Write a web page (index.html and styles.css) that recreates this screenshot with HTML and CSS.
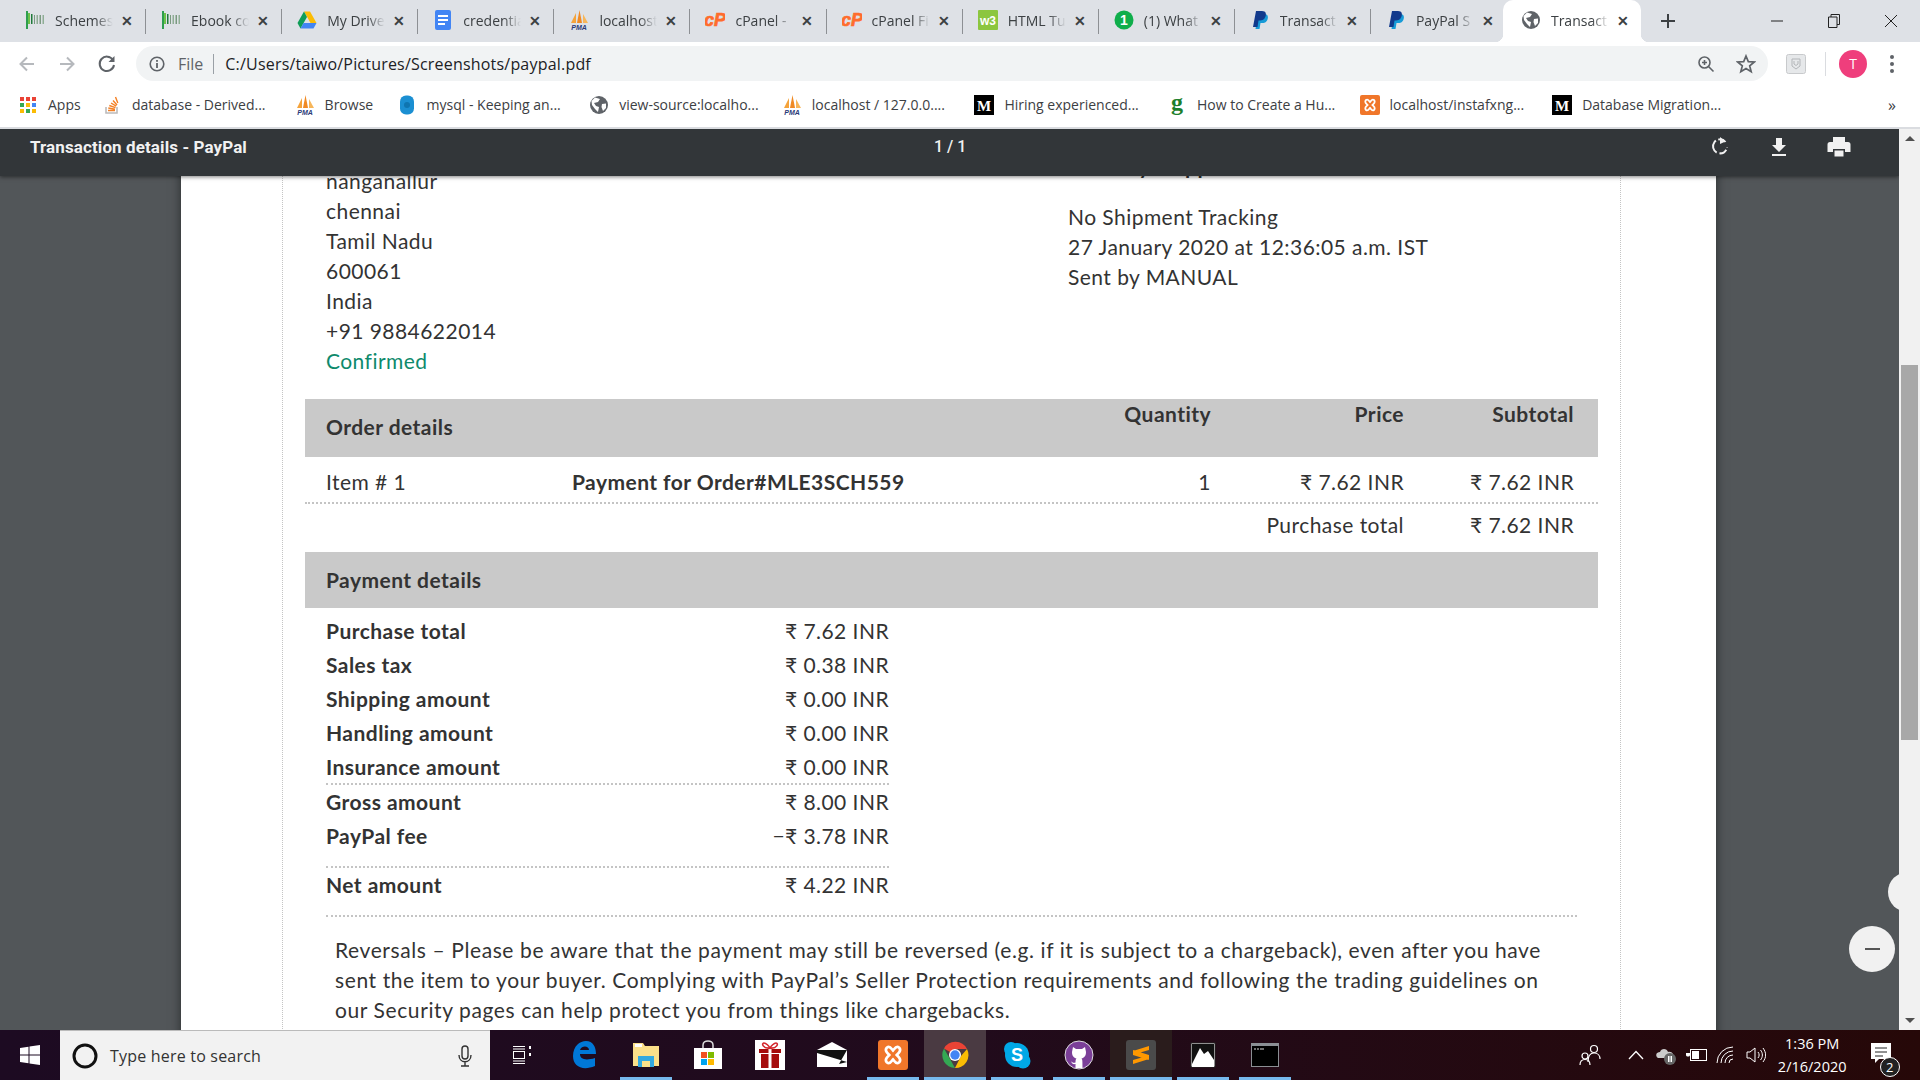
FILE: index.html
```html
<!DOCTYPE html>
<html>
  <head>
    <meta charset="UTF-8">
    <title>Transaction details - PayPal</title>
    <link rel="stylesheet" href="styles.css">
  </head>
  <body>
    <!-- shared favicons -->
    <svg class="sprite" width="0" height="0">
      <symbol id="ic-ilem" viewBox="0 0 20 20">
        <rect x="1" y="1" width="2" height="18" fill="#2e9e4f"/><rect x="3" y="3" width="2" height="11" fill="#6cc24a"/>
        <rect x="6" y="4" width="1.5" height="10" fill="#1f7a3a"/><rect x="9" y="5" width="1" height="9" fill="#7a9a80"/>
        <rect x="11.5" y="5" width="1.5" height="9" fill="#8fae95"/><rect x="14.5" y="5" width="1.5" height="9" fill="#7a9a80"/><rect x="17.5" y="5" width="1.5" height="9" fill="#8fae95"/>
      </symbol>
      <symbol id="ic-drive" viewBox="0 0 20 20">
        <polygon points="7,1.5 13,1.5 19.5,13 13.5,13" fill="#fbbc04"/>
        <polygon points="7,1.5 0.5,13 3.5,18.5 10,7" fill="#0f9d58"/>
        <polygon points="3.5,18.5 16.5,18.5 19.5,13 6.5,13" fill="#4285f4"/>
      </symbol>
      <symbol id="ic-docs" viewBox="0 0 20 20">
        <rect x="2" y="0" width="16" height="20" rx="2" fill="#4285f4"/>
        <rect x="5" y="5" width="10" height="2" fill="#fff"/><rect x="5" y="9" width="10" height="2" fill="#fff"/><rect x="5" y="13" width="7" height="2" fill="#fff"/>
      </symbol>
      <symbol id="ic-sails" viewBox="0 0 20 20">
        <polygon points="2,13 7,3 7,13" fill="#f5a33a"/><polygon points="8,13 10.5,0 13,13" fill="#f08a24"/><polygon points="14,13 14,4 19,13" fill="#f7b65a"/>
      </symbol>
      <symbol id="ic-paypal" viewBox="0 0 20 20">
        <path d="M8 4H14C18 4 18.500 7 17.500 9.500C16.500 12.500 14 13 12 13H10.500L9.500 19H5.500Z" fill="#179bd7"/>
        <path d="M6 1H12C16 1 16.500 4 15.500 6.500C14.500 9.500 12 10.500 10 10.500H8.500L7.500 17H3Z" fill="#123a8c"/>
      </symbol>
      <symbol id="ic-globe" viewBox="0 0 20 20">
        <circle cx="10" cy="10" r="9" fill="#5f6368"/>
        <path d="M6 2.500 L11 4 L9 7 L5 8 L7 11 L10 12 L9 17 L6 14 L3 10 L2.500 6Z" fill="#fff"/>
        <path d="M13 9 L17 8.500 L17 13 L14 16 L12.500 12Z" fill="#fff"/>
      </symbol>
      <symbol id="ic-xampp" viewBox="0 0 20 20">
        <rect width="20" height="20" rx="2" fill="#f0762a"/>
        <path d="M6 5 C8 3.500 9 6 10 7 C11 6 12 3.500 14 5 C16 7 13.500 9 12.500 10 C13.500 11 16 13 14 15 C12 16.500 11 14 10 13 C9 14 8 16.500 6 15 C4 13 6.500 11 7.500 10 C6.500 9 4 7 6 5Z" fill="none" stroke="#fff" stroke-width="1.800"/>
      </symbol>
    </svg>

    <div class="tabstrip">
      <div class="tab"><svg class="fav"><use href="#ic-ilem"/></svg><span class="tab-title">Schemes</span><span class="tab-x">✕</span></div><i class="tab-sep"></i>
      <div class="tab"><svg class="fav"><use href="#ic-ilem"/></svg><span class="tab-title">Ebook co</span><span class="tab-x">✕</span></div><i class="tab-sep"></i>
      <div class="tab"><svg class="fav"><use href="#ic-drive"/></svg><span class="tab-title">My Drive</span><span class="tab-x">✕</span></div><i class="tab-sep"></i>
      <div class="tab"><svg class="fav"><use href="#ic-docs"/></svg><span class="tab-title">credentia</span><span class="tab-x">✕</span></div><i class="tab-sep"></i>
      <div class="tab">
        <svg class="fav" viewBox="0 0 20 20"><use href="#ic-sails"/><text x="10" y="19.500" class="sv-pma">PMA</text></svg>
        <span class="tab-title">localhost</span><span class="tab-x">✕</span>
      </div><i class="tab-sep"></i>
      <div class="tab">
        <svg class="fav" viewBox="0 0 20 20"><text x="10" y="15.500" class="sv-cp">cP</text></svg>
        <span class="tab-title">cPanel -</span><span class="tab-x">✕</span>
      </div><i class="tab-sep"></i>
      <div class="tab">
        <svg class="fav" viewBox="0 0 20 20"><text x="10" y="15.500" class="sv-cp">cP</text></svg>
        <span class="tab-title">cPanel Fi</span><span class="tab-x">✕</span>
      </div><i class="tab-sep"></i>
      <div class="tab">
        <svg class="fav" viewBox="0 0 20 20"><rect width="20" height="20" rx="1" fill="#8cc63f"/><text x="10" y="14.500" class="sv-w3">w3</text></svg>
        <span class="tab-title">HTML Tu</span><span class="tab-x">✕</span>
      </div><i class="tab-sep"></i>
      <div class="tab">
        <svg class="fav" viewBox="0 0 20 20"><circle cx="10" cy="10" r="9.500" fill="#0fae4b"/><text x="10" y="15" class="sv-one">1</text></svg>
        <span class="tab-title">(1) What</span><span class="tab-x">✕</span>
      </div><i class="tab-sep"></i>
      <div class="tab"><svg class="fav"><use href="#ic-paypal"/></svg><span class="tab-title">Transact</span><span class="tab-x">✕</span></div><i class="tab-sep"></i>
      <div class="tab tab-last"><svg class="fav"><use href="#ic-paypal"/></svg><span class="tab-title">PayPal S</span><span class="tab-x">✕</span></div>
      <div class="tab tab-active"><svg class="fav"><use href="#ic-globe"/></svg><span class="tab-title">Transact</span><span class="tab-x">✕</span></div>
      <svg class="new-tab" width="14" height="14" viewBox="0 0 14 14"><path d="M7 0V14M0 7H14" stroke="#3c4043" stroke-width="2"/></svg>
      <div class="win-btns">
        <svg width="12" height="12" viewBox="0 0 12 12"><path d="M0 6H12" stroke="#222" stroke-width="1"/></svg>
        <svg width="12" height="14" viewBox="0 0 12 14"><path d="M3 3V0.500H11.500V10.500H9M0.500 3H9V13.500H0.500Z" fill="none" stroke="#222"/></svg>
        <svg width="14" height="14" viewBox="0 0 14 14"><path d="M1 1L13 13M13 1L1 13" stroke="#222"/></svg>
      </div>
    </div>

    <div class="toolbar">
      <svg class="nav" viewBox="0 0 20 20"><path d="M17 10H4M10 3.500L3.500 10L10 16.500" fill="none" stroke="#b6b9bd" stroke-width="2"/></svg>
      <svg class="nav" viewBox="0 0 20 20"><path d="M3 10H16M10 3.500L16.500 10L10 16.500" fill="none" stroke="#b6b9bd" stroke-width="2"/></svg>
      <svg class="nav" viewBox="0 0 20 20"><path d="M16 6A7.200 7.200 0 1 0 17 11" fill="none" stroke="#5f6368" stroke-width="2"/><polygon points="17.500,2 17.500,8 11.500,8" fill="#5f6368"/></svg>
      <div class="omnibox">
        <svg class="omni-info" width="16" height="16" viewBox="0 0 16 16"><circle cx="8" cy="8" r="6.800" fill="none" stroke="#5f6368" stroke-width="1.600"/><rect x="7.100" y="7" width="1.800" height="5" fill="#5f6368"/><rect x="7.100" y="4" width="1.800" height="1.800" fill="#5f6368"/></svg>
        <span class="omni-file">File</span>
        <i class="omni-sep"></i>
        <span class="omni-url">C:/Users/taiwo/Pictures/Screenshots/paypal.pdf</span>
        <svg class="omni-zoom" width="18" height="18" viewBox="0 0 18 18"><circle cx="7.500" cy="7.500" r="5.500" fill="none" stroke="#5f6368" stroke-width="1.600"/><path d="M11.500 11.500L16.500 16.500M5 7.500H10M7.500 5V10" stroke="#5f6368" stroke-width="1.600"/></svg>
        <svg class="omni-star" width="20" height="20" viewBox="0 0 20 20"><polygon points="10,2 12.300,7.600 18.300,8 13.700,11.900 15.200,17.800 10,14.600 4.800,17.800 6.300,11.900 1.700,8 7.700,7.600" fill="none" stroke="#5f6368" stroke-width="1.700"/></svg>
      </div>
      <svg class="ext" width="20" height="20" viewBox="0 0 20 20"><rect x="0.500" y="0.500" width="19" height="19" rx="2" fill="#e6e8ea" stroke="#c8cacc"/><path d="M6 5H14V12L10 15L6 12Z" fill="none" stroke="#b3b6b9"/><path d="M8 7V10L10 11.500L12 10V7" fill="none" stroke="#b3b6b9"/></svg>
      <i class="tool-sep"></i>
      <div class="avatar">T</div>
      <div class="dots"><i></i><i></i><i></i></div>
    </div>

    <div class="bookmarks">
      <div class="bm bm-apps">
        <svg class="fav" viewBox="0 0 20 20">
          <rect x="2" y="2" width="4" height="4" fill="#ea4335"/><rect x="8" y="2" width="4" height="4" fill="#ea4335"/><rect x="14" y="2" width="4" height="4" fill="#ea4335"/>
          <rect x="2" y="8" width="4" height="4" fill="#34a853"/><rect x="8" y="8" width="4" height="4" fill="#fbbc04"/><rect x="14" y="8" width="4" height="4" fill="#4285f4"/>
          <rect x="2" y="14" width="4" height="4" fill="#fbbc04"/><rect x="8" y="14" width="4" height="4" fill="#34a853"/><rect x="14" y="14" width="4" height="4" fill="#fbbc04"/>
        </svg>
        <span>Apps</span>
      </div>
      <div class="bm">
        <svg class="fav" viewBox="0 0 20 20"><path d="M4 12V18H15V12" fill="none" stroke="#bcbbbb" stroke-width="1.600"/><path d="M6 15.500H13M6.300 13L13 14.200M7.300 10.500L13.500 12.600M9 8L14.200 11.200M11 5.500L15 10M13.500 2L15.800 8" stroke="#f48024" stroke-width="1.400" fill="none"/></svg>
        <span>database - Derived...</span>
      </div>
      <div class="bm bm-short">
        <svg class="fav" viewBox="0 0 20 20"><use href="#ic-sails"/><text x="10" y="19.500" class="sv-pma">PMA</text></svg>
        <span>Browse</span>
      </div>
      <div class="bm">
        <svg class="fav" viewBox="0 0 20 20"><rect x="3" y="0.500" width="14" height="19" rx="6" fill="#1b8fd2"/><circle cx="10" cy="10" r="3" fill="#0f75b0"/></svg>
        <span>mysql - Keeping an...</span>
      </div>
      <div class="bm"><svg class="fav"><use href="#ic-globe"/></svg><span>view-source:localho...</span></div>
      <div class="bm">
        <svg class="fav" viewBox="0 0 20 20"><use href="#ic-sails"/><text x="10" y="19.500" class="sv-pma">PMA</text></svg>
        <span>localhost / 127.0.0....</span>
      </div>
      <div class="bm">
        <svg class="fav" viewBox="0 0 20 20"><rect width="20" height="20" fill="#000"/><text x="10" y="15.500" class="sv-m">M</text></svg>
        <span>Hiring experienced...</span>
      </div>
      <div class="bm">
        <svg class="fav" viewBox="0 0 20 20"><text x="10" y="15" class="sv-g">g</text></svg>
        <span>How to Create a Hu...</span>
      </div>
      <div class="bm"><svg class="fav"><use href="#ic-xampp"/></svg><span>localhost/instafxng...</span></div>
      <div class="bm">
        <svg class="fav" viewBox="0 0 20 20"><rect width="20" height="20" fill="#000"/><text x="10" y="15.500" class="sv-m">M</text></svg>
        <span>Database Migration...</span>
      </div>
      <span class="bm-more">»</span>
    </div>

    <div class="viewer">
      <div class="viewer-main">
        <div class="pdf-bar">
          <span class="pdf-title">Transaction details - PayPal</span>
          <span class="pdf-count">1 / 1</span>
          <div class="pdf-tools">
            <svg width="22" height="22" viewBox="0 0 22 22"><path d="M16.500 6A7 7 0 1 0 18 11" fill="none" stroke="#f1f1f1" stroke-width="2" stroke-dasharray="8 2.500 14 3"/><polygon points="11,1 16.500,5.500 11,8" fill="#f1f1f1"/></svg>
            <svg width="22" height="22" viewBox="0 0 22 22"><path d="M8 2H14V9H18L11 16L4 9H8Z" fill="#f1f1f1"/><rect x="4" y="18" width="14" height="2" fill="#f1f1f1"/></svg>
            <svg width="24" height="22" viewBox="0 0 24 22"><path d="M6 1H18V6H6Z" fill="#f1f1f1"/><path d="M3 6H21A2.500 2.500 0 0 1 23.500 8.500V16H18V13H6V16H0.500V8.500A2.500 2.500 0 0 1 3 6Z" fill="#f1f1f1"/><path d="M7.500 14.500H16.500V20.500H7.500Z" fill="#f1f1f1"/></svg>
          </div>
        </div>

        <div class="pdf-canvas">
          <div class="page">
            <div class="page-inner">
              <div class="top-block">
                <div class="ship-to">
                  <p>nanganallur</p>
                  <p>chennai</p>
                  <p>Tamil Nadu</p>
                  <p>600061</p>
                  <p>India</p>
                  <p>+91 9884622014</p>
                  <p class="confirmed">Confirmed</p>
                </div>
                <div class="shipment">
                  <p class="ship-head">Delivery Shipper</p>
                  <p>No Shipment Tracking</p>
                  <p>27 January 2020 at 12:36:05 a.m. IST</p>
                  <p>Sent by MANUAL</p>
                </div>
              </div>

              <div class="order-head">
                <span class="order-title">Order details</span>
                <span class="col-qty">Quantity</span>
                <span class="col-price">Price</span>
                <span class="col-sub">Subtotal</span>
              </div>
              <div class="order-row">
                <span class="item-no">Item # 1</span>
                <span class="item-name">Payment for Order#MLE3SCH559</span>
                <span class="col-qty">1</span>
                <span class="col-price">₹ 7.62 INR</span>
                <span class="col-sub">₹ 7.62 INR</span>
              </div>
              <div class="order-total">
                <span class="col-price">Purchase total</span>
                <span class="col-sub">₹ 7.62 INR</span>
              </div>

              <div class="pay-head">Payment details</div>
              <div class="pay-list">
                <div class="pay-row"><b>Purchase total</b><span>₹ 7.62 INR</span></div>
                <div class="pay-row"><b>Sales tax</b><span>₹ 0.38 INR</span></div>
                <div class="pay-row"><b>Shipping amount</b><span>₹ 0.00 INR</span></div>
                <div class="pay-row"><b>Handling amount</b><span>₹ 0.00 INR</span></div>
                <div class="pay-row pay-rule"><b>Insurance amount</b><span>₹ 0.00 INR</span></div>
                <div class="pay-row"><b>Gross amount</b><span>₹ 8.00 INR</span></div>
                <div class="pay-row pay-fee"><b>PayPal fee</b><span>−₹ 3.78 INR</span></div>
                <div class="pay-row pay-net"><b>Net amount</b><span>₹ 4.22 INR</span></div>
              </div>
              <div class="pay-end"></div>
              <p class="reversals">Reversals – Please be aware that the payment may still be reversed (e.g. if it is subject to a chargeback), even after you have sent the item to your buyer. Complying with PayPal’s Seller Protection requirements and following the trading guidelines on our Security pages can help protect you from things like chargebacks.</p>
            </div>
          </div>
        </div>

        <div class="fab fab-fit"></div>
        <div class="fab fab-minus"><i></i></div>
      </div>
      <div class="scrollbar">
        <div class="sb-up"></div>
        <div class="sb-thumb"></div>
        <div class="sb-down"></div>
      </div>
    </div>

    <div class="taskbar">
      <div class="start">
        <svg width="20" height="20" viewBox="0 0 20 20"><polygon points="0,3 8.500,1.800 8.500,9.500 0,9.500" fill="#fff"/><polygon points="9.500,1.600 20,0 20,9.500 9.500,9.500" fill="#fff"/><polygon points="0,10.500 8.500,10.500 8.500,18.200 0,17" fill="#fff"/><polygon points="9.500,10.500 20,10.500 20,20 9.500,18.400" fill="#fff"/></svg>
      </div>
      <div class="search">
        <svg width="26" height="26" viewBox="0 0 26 26"><circle cx="13" cy="13" r="11" fill="none" stroke="#111" stroke-width="3"/></svg>
        <span class="search-text">Type here to search</span>
        <svg class="search-mic" width="14" height="22" viewBox="0 0 14 22"><rect x="4" y="1" width="6" height="13" rx="3" fill="none" stroke="#333" stroke-width="1.400"/><path d="M1 10C1 19 13 19 13 10M7 17V21M3 21H11" fill="none" stroke="#333" stroke-width="1.400"/></svg>
      </div>
      <div class="task-view">
        <svg width="20" height="20" viewBox="0 0 20 20"><path d="M1 1.500H13M1 18.500H13M1 4H13M1 16H13" stroke="#fff"/><rect x="1.500" y="6.500" width="11" height="7" fill="none" stroke="#fff"/><rect x="17" y="1" width="2" height="3" fill="#fff"/><rect x="17" y="8" width="2" height="3" fill="#fff"/></svg>
      </div>

      <div class="app">
        <svg width="26" height="30" viewBox="0 0 26 30"><path d="M2 16C2 6 9 1 15 1C22 1 25 7 25 14H9C9 19 14 21 24 18V26C12 31 2 27 2 16ZM9 10H18C18 6 11 5 9 10Z" fill="#0078d7"/></svg>
      </div>
      <div class="app app-open">
        <svg width="28" height="26" viewBox="0 0 28 26"><path d="M1 1H11L13 4H27V24H1Z" fill="#fbe08a"/><rect x="3" y="2" width="7" height="3" fill="#fff"/><path d="M6 14H22V25H18V19H10V25H6Z" fill="#33a9e0"/><rect x="10" y="19" width="8" height="6" fill="#fbe08a"/></svg>
      </div>
      <div class="app">
        <svg width="30" height="30" viewBox="0 0 30 30"><path d="M10 9V5C10 -0.500 20 -0.500 20 5V9" fill="none" stroke="#ddd" stroke-width="1.500"/><rect x="1" y="8" width="28" height="21" fill="#fff"/><rect x="8" y="12" width="6" height="6" fill="#f25022"/><rect x="15" y="12" width="6" height="6" fill="#7fba00"/><rect x="8" y="19" width="6" height="6" fill="#00a4ef"/><rect x="15" y="19" width="6" height="6" fill="#ffb900"/></svg>
      </div>
      <div class="app">
        <svg width="30" height="30" viewBox="0 0 30 30"><rect width="30" height="30" fill="#fff"/><rect x="4" y="9" width="22" height="4" fill="#a50d0d"/><rect x="6" y="14" width="18" height="14" fill="#a50d0d"/><rect x="13.500" y="9" width="3" height="19" fill="#fff"/><path d="M15 8C8 9 6 3 9 3C11 3 14 6 15 8C16 6 19 3 21 3C24 3 22 9 15 8Z" fill="none" stroke="#d4262c" stroke-width="1.600"/></svg>
      </div>
      <div class="app">
        <svg width="30" height="26" viewBox="0 0 30 26"><path d="M0 8L15 0L30 8V25H0Z" fill="#fff"/><path d="M0 8L30 8L22 22L30 20L0 11Z" fill="#111"/><path d="M3 8L15 2L27 8Z" fill="#fff"/></svg>
      </div>
      <div class="app app-open">
        <svg width="30" height="30"><use href="#ic-xampp"/></svg>
      </div>
      <div class="app app-open app-hot">
        <svg width="28" height="28" viewBox="0 0 28 28">
          <path d="M14 14L3 7.500A13 13 0 0 1 26 8H14Z" fill="#ea4335"/>
          <path d="M14 27A13 13 0 0 1 3 7.500L9 18Z" fill="#34a853"/>
          <path d="M26 8A13 13 0 0 1 14 27L20 15Z" fill="#fbbc04"/>
          <circle cx="14" cy="14" r="6" fill="#fff"/><circle cx="14" cy="14" r="4.700" fill="#4285f4"/>
        </svg>
      </div>
      <div class="app app-open">
        <svg width="28" height="28" viewBox="0 0 28 28"><circle cx="8" cy="8" r="7" fill="#00a8e6"/><circle cx="20" cy="20" r="7.500" fill="#00a8e6"/><circle cx="14" cy="14" r="12" fill="#00a8e6"/><text x="14" y="20" class="sv-skype">S</text></svg>
      </div>
      <div class="app app-open">
        <svg width="30" height="30" viewBox="0 0 30 30"><circle cx="15" cy="15" r="14" fill="#7b3f98" stroke="#ddd" stroke-width="1"/><path d="M9 7L12 9H18L21 7L22 12C22 16 20 18 17.500 18.500C18.500 19.500 18.500 21 18.500 28H11.500V24C9 24.500 8 23.500 7 21.500C8 22 9.500 23.500 11.500 22.500C11.500 20.500 11.500 19.500 12.500 18.500C10 18 8 16 8 12Z" fill="#fff"/></svg>
      </div>
      <div class="app app-open app-dim">
        <svg width="30" height="30" viewBox="0 0 30 30"><rect width="30" height="30" rx="3" fill="#4a4a4a"/><path d="M23 6L7 11V15L23 20V16L12.500 13L23 10ZM7 24L23 19V15L7 10V14L17.500 17L7 20Z" fill="#ff9800"/></svg>
      </div>
      <div class="app app-open">
        <svg width="26" height="26" viewBox="0 0 26 26"><rect x="1" y="1" width="24" height="24" fill="#fff" stroke="#222"/><rect x="2" y="2" width="22" height="20" fill="#111"/><path d="M2 22L10 6L14 12L18 9L24 18V25H2Z" fill="#fff"/></svg>
      </div>
      <div class="app app-open">
        <svg width="28" height="24" viewBox="0 0 28 24"><rect x="0.500" y="0.500" width="27" height="23" fill="#000" stroke="#8b8f94"/><rect x="1" y="1" width="26" height="2" fill="#8b8f94"/><path d="M3 6H5M6 6H8M9 6H13" stroke="#ddd"/></svg>
      </div>

      <div class="tray">
        <svg class="tray-people" width="22" height="22" viewBox="0 0 22 22"><circle cx="15" cy="5" r="3.500" fill="none" stroke="#fff" stroke-width="1.200"/><path d="M9 18C9 12 11 9 15 9C19 9 21 12 21 15" fill="none" stroke="#fff" stroke-width="1.200"/><circle cx="6" cy="12" r="3" fill="none" stroke="#fff" stroke-width="1.200"/><path d="M1 21C1 17 3 15.500 6 15.500C9 15.500 11 17 11 21" fill="none" stroke="#fff" stroke-width="1.200"/></svg>
        <div class="tray-item"><svg width="16" height="10" viewBox="0 0 16 10"><path d="M1 9L8 1.500L15 9" fill="none" stroke="#fff" stroke-width="1.300"/></svg></div>
        <div class="tray-item"><svg width="22" height="22" viewBox="0 0 22 22"><path d="M3 14C0 12 1 8 5 8C6 4 12 4 13 8C17 7 20 11 17 14Z" fill="#ccc"/><circle cx="15" cy="15" r="6" fill="#666"/><rect x="13" y="12" width="1.500" height="6" fill="#fff"/><rect x="15.500" y="12" width="1.500" height="6" fill="#fff"/></svg></div>
        <div class="tray-item"><svg width="22" height="18" viewBox="0 0 22 18"><rect x="5.500" y="3.500" width="16" height="11" fill="none" stroke="#fff"/><rect x="7" y="5" width="7" height="8" fill="#fff"/><path d="M3 1V7H1V9C1 11 5 11 5 9V7H3" fill="#fff"/></svg></div>
        <div class="tray-item"><svg width="20" height="20" viewBox="0 0 20 20"><path d="M1 18A16 16 0 0 1 17 2M5 18A12 12 0 0 1 17 6M9 18A8 8 0 0 1 17 10M13 18A4 4 0 0 1 17 14" fill="none" stroke="#fff" stroke-width="1"/></svg></div>
        <div class="tray-item"><svg width="20" height="20" viewBox="0 0 20 20"><path d="M1 7H4L9 3V17L4 13H1Z" fill="none" stroke="#fff"/><path d="M12 7C13.500 9 13.500 11 12 13M14.500 5C17 8 17 12 14.500 15M17 3C20.500 8 20.500 12 17 17" fill="none" stroke="#fff"/></svg></div>
        <div class="clock"><span>1:36 PM</span><span>2/16/2020</span></div>
        <div class="notif">
          <svg width="20" height="20" viewBox="0 0 20 20"><path d="M0 0H20V16H8L4 20V16H0Z" fill="#fff"/><path d="M4 5H16M4 9H16M4 13H12" stroke="#222"/></svg>
          <span class="notif-count">2</span>
        </div>
      </div>
    </div>
  </body>
</html>
```

FILE: styles.css
```css
* {
    box-sizing: border-box;
}

html, body {
    height: 100%;
}

body {
    margin: 0;
    width: 1920px;
    height: 1080px;
    overflow: hidden;
    display: flex;
    flex-direction: column;
    font-family: "Open Sans", "Noto Sans", sans-serif;
    color: #3c4043;
    background: #fff;
}

p {
    margin: 0;
}

.sprite {
    position: absolute;
}

/* text inside icons */
.sv-pma { font: italic bold 7px "Liberation Sans", sans-serif; fill: #2b3a78; text-anchor: middle; }
.sv-cp { font: italic bold 18px "Liberation Sans", sans-serif; fill: #ff6c2c; stroke: #ff6c2c; stroke-width: 0.7px; text-anchor: middle; }
.sv-m { font: bold 15px "Liberation Serif", serif; fill: #fff; text-anchor: middle; }
.sv-g { font: bold 24px "Liberation Serif", serif; fill: #1d7f2c; text-anchor: middle; }
.sv-w3 { font: bold 12px "Liberation Sans", sans-serif; fill: #fff; text-anchor: middle; }
.sv-one { font: bold 14px "Liberation Sans", sans-serif; fill: #fff; text-anchor: middle; }
.sv-skype { font: bold 18px "Liberation Sans", sans-serif; fill: #fff; text-anchor: middle; }

.fav {
    width: 20px;
    height: 20px;
    flex: none;
}

/* tabs */
.tabstrip {
    height: 42px;
    flex: none;
    display: flex;
    align-items: center;
    padding-left: 10px;
    background: #dee1e6;
}

.tab {
    position: relative;
    width: 135.100px;
    height: 42px;
    flex: none;
    display: flex;
    align-items: center;
    padding: 0 0 2px 15px;
    font-size: 14px;
}

.tab-title {
    width: 58px;
    margin-left: 10px;
    overflow: hidden;
    white-space: nowrap;
    -webkit-mask-image: linear-gradient(90deg, #000 70%, transparent);
    mask-image: linear-gradient(90deg, #000 70%, transparent);
}

.tab-x {
    margin-left: 8px;
    font-size: 14px;
    font-weight: 700;
    color: #3c4043;
}

.tab-sep {
    width: 1px;
    height: 25px;
    flex: none;
    background: #8d9094;
}

.tab-last {
    width: 132px;
}

.tab-active {
    width: 138px;
    padding-left: 18px;
    background: #fff;
    border-radius: 10px 10px 0 0;
}

.tab-active::before,
.tab-active::after {
    content: "";
    position: absolute;
    bottom: 0;
    width: 8px;
    height: 8px;
}

.tab-active::before {
    left: -8px;
    background: radial-gradient(circle at 0 0, transparent 8px, #fff 8.500px);
}

.tab-active::after {
    right: -8px;
    background: radial-gradient(circle at 100% 0, transparent 8px, #fff 8.500px);
}

.new-tab {
    margin-left: 20px;
}

.win-btns {
    margin-left: auto;
    width: 149px;
    padding-right: 22px;
    display: flex;
    justify-content: space-between;
    align-items: center;
}

/* address bar */
.toolbar {
    height: 43px;
    flex: none;
    display: flex;
    align-items: center;
    padding-left: 7px;
    background: #fff;
}

.nav {
    width: 40px;
    height: 20px;
    flex: none;
}

.omnibox {
    width: 1632px;
    height: 35px;
    margin-left: 9px;
    display: flex;
    align-items: center;
    padding-left: 13px;
    border-radius: 18px;
    background: #f1f3f4;
}

.omni-file {
    margin-left: 13px;
    font-size: 16px;
    color: #5f6368;
}

.omni-sep {
    width: 1px;
    height: 20px;
    margin: 0 11px 0 10px;
    background: #9aa0a6;
}

.omni-url {
    padding-top: 1px;
    font-size: 16px;
    color: #202124;
    letter-spacing: 0.2px;
}

.omni-zoom {
    margin-left: auto;
}

.omni-star {
    margin: 0 12px 0 21px;
}

.ext {
    margin-left: 18px;
}

.tool-sep {
    width: 1px;
    height: 24px;
    margin: 0 13px 0 19px;
    background: #dadce0;
}

.avatar {
    width: 28px;
    height: 28px;
    border-radius: 50%;
    display: flex;
    align-items: center;
    justify-content: center;
    background: #ef3e7c;
    color: #fff;
    font-size: 14px;
}

.dots {
    margin-left: 23px;
    display: flex;
    flex-direction: column;
    gap: 3px;
}

.dots i {
    width: 4px;
    height: 4px;
    border-radius: 50%;
    background: #5f6368;
}

/* bookmarks */
.bookmarks {
    height: 44px;
    flex: none;
    display: flex;
    align-items: center;
    padding: 0 0 3px 18px;
    border-bottom: 2px solid #dadce0;
    font-size: 14px;
    background: #fff;
}

.bm {
    width: 192.600px;
    flex: none;
    display: flex;
    align-items: center;
    gap: 10px;
    white-space: nowrap;
    color: #3c4043;
}

.bm-apps {
    width: 84px;
}

.bm-short {
    width: 102px;
}

.bm-more {
    margin-left: auto;
    margin-right: 24px;
    font-size: 16px;
}

/* pdf viewer */
.viewer {
    flex: 1;
    min-height: 0;
    display: flex;
}

.viewer-main {
    position: relative;
    flex: 1;
    min-width: 0;
    display: flex;
    flex-direction: column;
    overflow: hidden;
    background: #525659;
}

.pdf-bar {
    position: relative;
    z-index: 2;
    height: 47px;
    flex: none;
    display: flex;
    align-items: center;
    padding: 0 0 12px 30px;
    background: #323639;
    color: #f1f1f1;
    box-shadow: 0 1px 4px rgba(0, 0, 0, 0.5);
}

.pdf-title {
    width: 904px;
    font: 700 17px "Roboto", sans-serif;
    letter-spacing: 0.1px;
}

.pdf-count {
    font: 500 16px "Roboto", sans-serif;
}

.pdf-tools {
    margin-left: 743px;
    display: flex;
    align-items: center;
    gap: 37px;
}

.pdf-canvas {
    flex: 1;
    min-height: 0;
    overflow: hidden;
}

.page {
    width: 1535px;
    margin: -20px 0 0 181px;
    padding-left: 101px;
    background: #fff;
    box-shadow: 0 0 10px rgba(0, 0, 0, 0.5);
    font: 400 21px/30px "Lato", "Noto Sans", sans-serif;
    letter-spacing: 0.45px;
    color: #333;
}

.page-inner {
    width: 1339px;
    padding: 0 22px 40px;
    border-left: 1px dotted #c4c4c4;
    border-right: 1px dotted #c4c4c4;
}

.top-block {
    height: 243px;
    display: flex;
}

.ship-to {
    width: 763px;
    padding: 10px 0 0 21px;
}

.confirmed {
    color: #0e8a6c;
}

.ship-head {
    margin: -5px 0 21px;
    font-weight: 700;
}

.order-head,
.order-row,
.order-total {
    display: flex;
    padding: 0 19px 0 21px;
}

.order-head {
    height: 58px;
    background: #c9c9c9;
    font-weight: 700;
    line-height: 30px;
}

.order-title {
    align-self: center;
    padding-bottom: 2px;
    width: 581px;
}

.col-qty {
    width: 304px;
    text-align: right;
}

.col-price {
    width: 193px;
    text-align: right;
}

.col-sub {
    width: 170px;
    text-align: right;
}

.order-row {
    height: 47px;
    padding-top: 4px;
    align-items: center;
    border-bottom: 2px dotted #c4c4c4;
}

.item-no {
    width: 246px;
}

.item-name {
    width: 335px;
    white-space: nowrap;
    font-weight: 700;
}

.order-total {
    height: 48px;
    align-items: center;
    justify-content: flex-end;
    padding-right: 24px;
    padding-bottom: 7px;
}

.pay-head {
    height: 56px;
    padding-left: 21px;
    display: flex;
    align-items: center;
    background: #c9c9c9;
    font-weight: 700;
}

.pay-list {
    width: 563px;
    margin: 6px 0 0 21px;
}

.pay-row {
    height: 34px;
    display: flex;
    align-items: center;
    justify-content: space-between;
}

.pay-row b {
    font-weight: 700;
}

.pay-rule {
    height: 35px;
    border-bottom: 2px dotted #c4c4c4;
}

.pay-fee {
    height: 49px;
    padding-bottom: 14px;
    border-bottom: 2px dotted #c4c4c4;
}

.pay-net {
    height: 47px;
    padding-bottom: 13px;
}

.pay-end {
    margin: 0 21px;
    border-top: 2px dotted #c4c4c4;
}

.reversals {
    width: 1230px;
    margin: 18px 0 0 30px;
    line-height: 30px;
    letter-spacing: 0.6px;
}

.fab {
    position: absolute;
    border-radius: 50%;
    background: #f1f1f1;
}

.fab-fit {
    right: -29px;
    bottom: 118px;
    width: 40px;
    height: 40px;
}

.fab-minus {
    right: 4px;
    bottom: 58px;
    width: 46px;
    height: 46px;
    display: flex;
    align-items: center;
    justify-content: center;
}

.fab-minus i {
    width: 15px;
    height: 2px;
    background: #555;
}

.scrollbar {
    width: 21px;
    flex: none;
    display: flex;
    flex-direction: column;
    align-items: center;
    background: #f1f1f1;
}

.sb-up {
    margin-top: 7px;
    border: 5px solid transparent;
    border-top: 0;
    border-bottom: 5px solid #505050;
}

.sb-thumb {
    width: 17px;
    height: 375px;
    margin-top: 224px;
    background: #a8a8a8;
}

.sb-down {
    margin-top: auto;
    margin-bottom: 7px;
    border: 5px solid transparent;
    border-bottom: 0;
    border-top: 5px solid #505050;
}

/* windows taskbar */
.taskbar {
    height: 50px;
    flex: none;
    display: flex;
    align-items: stretch;
    background: linear-gradient(90deg, #1d0b22, #210b1c 50%, #260808);
    color: #fff;
}

.start {
    width: 60px;
    display: flex;
    align-items: center;
    justify-content: center;
}

.search {
    width: 430px;
    display: flex;
    align-items: center;
    padding: 0 18px 0 12px;
    background: #f2f2f2;
    border-top: 1px solid #bbb;
}

.search-text {
    margin-left: 12px;
    font-size: 16px;
    letter-spacing: 0.2px;
    color: #333;
}

.search-mic {
    margin-left: auto;
}

.task-view {
    width: 63px;
    display: flex;
    align-items: center;
    justify-content: center;
}

.app {
    position: relative;
    width: 61.900px;
    flex: none;
    display: flex;
    align-items: center;
    justify-content: center;
}

.app-open::after {
    content: "";
    position: absolute;
    left: 5px;
    right: 5px;
    bottom: 0;
    height: 3px;
    background: #76b9ed;
}

.app-hot {
    background: #4a3a42;
}

.app-dim {
    background: #2a1c1c;
}

.app-hot::after,
.app-dim::after {
    left: 0;
    right: 0;
}

.tray {
    flex: 1;
    display: flex;
    align-items: center;
    padding-left: 283px;
}

.tray-people {
    margin-right: 20px;
}

.tray-item {
    width: 30px;
    display: flex;
    justify-content: center;
}

.clock {
    width: 83px;
    display: flex;
    flex-direction: column;
    align-items: center;
    gap: 3px;
    font-size: 14.500px;
    line-height: 20px;
}

.notif {
    position: relative;
    margin-left: 17px;
}

.notif-count {
    position: absolute;
    right: -9px;
    bottom: -9px;
    width: 20px;
    height: 20px;
    border-radius: 50%;
    border: 1px solid #fff;
    background: #222;
    text-align: center;
    font-size: 13px;
    line-height: 18px;
}
```
